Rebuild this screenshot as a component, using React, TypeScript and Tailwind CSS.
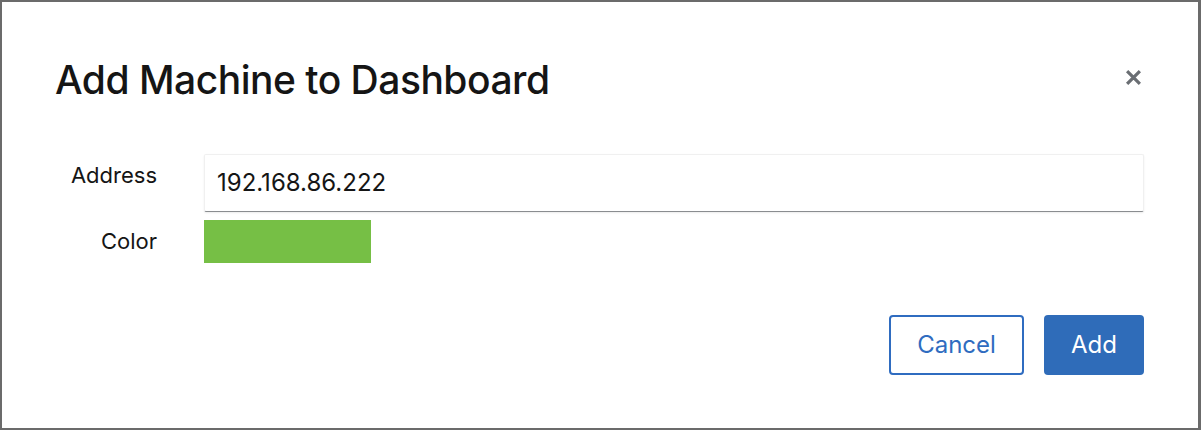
import React from 'react';

const font = { fontFamily: 'Inter, "Noto Sans", sans-serif' };

const App: React.FC = () => {
    return (
        <div
            className="w-[1201px] h-[430px] bg-white border-t-2 border-l-2 border-b-2 border-r-[3px] border-[#6b6b6b] flex flex-col pl-[53px] pr-[54px] text-[#151515]"
            style={font}
        >
            <div className="flex items-center justify-between pt-[52px]">
                <h1 className="text-[39px] leading-[52px] font-medium tracking-[-0.5px]">Add Machine to Dashboard</h1>
                <button className="w-[24px] h-[24px] flex items-center justify-center text-[#6a6e73] -mr-[1px] -mt-[6px]">
                    <svg width="17" height="17" viewBox="0 0 16 16">
                        <path d="M2 2 L14 14 M14 2 L2 14" stroke="currentColor" strokeWidth="3" strokeLinecap="butt" />
                    </svg>
                </button>
            </div>

            <div className="grid grid-cols-[102px_1fr] gap-x-[47px] gap-y-[8px] mt-[48px] items-center">
                <label className="text-right text-[22px] self-start pt-[5px]">Address</label>
                <div className="h-[58px] border border-[#f0f0f0] border-b-[#8a8d90] rounded-[2px] shadow-[0_1px_2px_rgba(0,0,0,0.08)] flex items-center px-[12px] text-[24px]">
                    192.168.86.222
                </div>
                <label className="text-right text-[22px]">Color</label>
                <div className="w-[167px] h-[43px] bg-[#76bf45]" />
            </div>

            <div className="flex justify-end gap-[20px] mt-[52px]">
                <button className="w-[135px] h-[60px] rounded-[4px] border-2 border-[#2f6cc0] text-[#2f6cc0] text-[24px]">
                    Cancel
                </button>
                <button className="w-[100px] h-[60px] rounded-[4px] bg-[#2f6cb9] text-white text-[24px]">
                    Add
                </button>
            </div>
        </div>
    );
};

export default App;
